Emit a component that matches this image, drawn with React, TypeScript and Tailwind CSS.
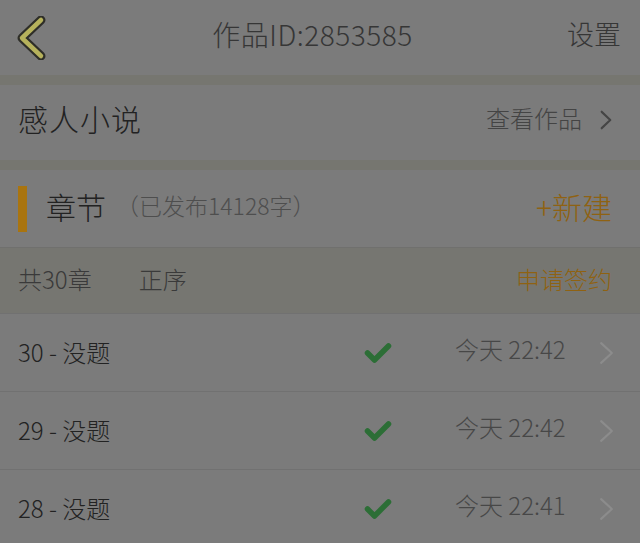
import React from "react";

const font = { fontFamily: '"Noto Sans CJK SC", "Noto Sans", sans-serif' };

function Chevron({ color, w = 14, h = 22, sw = 2.5 }: { color: string; w?: number; h?: number; sw?: number }) {
  return (
    <svg width={w} height={h} viewBox="0 0 14 22" fill="none" preserveAspectRatio="none">
      <path d="M2 2 L12 11 L2 20" stroke={color} strokeWidth={sw} strokeLinecap="round" strokeLinejoin="round" />
    </svg>
  );
}

function Check() {
  return (
    <svg width="28" height="22" viewBox="0 0 28 22" fill="none">
      <path d="M3.5 11 L10.5 18 L24.5 4" stroke="#2c6e36" strokeWidth="5.5" strokeLinecap="round" strokeLinejoin="round" />
    </svg>
  );
}

function Back() {
  return (
    <svg width="30" height="44" viewBox="0 0 30 44" fill="none">
      <path d="M25 4 L6 22 L25 40" stroke="#2e2e28" strokeWidth="9" strokeLinecap="round" strokeLinejoin="round" />
      <path d="M25 4 L6 22 L25 40" stroke="#b6b25c" strokeWidth="4.5" strokeLinecap="round" strokeLinejoin="round" />
    </svg>
  );
}

const chapters = [
  { n: 30, t: "今天 22:42" },
  { n: 29, t: "今天 22:42" },
  { n: 28, t: "今天 22:41" },
];

export default function App() {
  return (
    <div className="w-[640px] h-[543px] overflow-hidden bg-[#7b7b7b] font-light" style={font}>
      {/* header */}
      <div className="h-[75px] flex items-center justify-between pl-[16px] pr-[19px] bg-[#7b7b7b]">
        <div className="w-[42px] flex items-center">
          <Back />
        </div>
        <div className="pb-[8px] text-[28px] text-[#363636] leading-none tracking-[0.5px]">作品ID:2853585</div>
        <div className="pb-[8px] text-[27px] text-[#363636] leading-none">设置</div>
      </div>
      <div className="h-[10px] bg-[#767670]" />
      {/* book row */}
      <div className="h-[75px] flex items-center justify-between pl-[18px] pr-[28px] bg-[#7b7b7b]">
        <div className="pb-[10px] text-[30px] text-[#222] leading-none tracking-[1px]">感人小说</div>
        <div className="pb-[6px] flex items-center gap-[18px]">
          <span className="text-[24px] text-[#444] leading-none pb-[4px]">查看作品</span>
          <Chevron color="#454545" w={12} h={20} />
        </div>
      </div>
      <div className="h-[10px] bg-[#767670]" />
      {/* chapter header */}
      <div className="h-[78px] flex items-center justify-between pl-[18px] pr-[28px] bg-[#7b7b7b] border-b border-[#70706e]">
        <div className="flex items-center">
          <div className="w-[9px] h-[46px] bg-[#a9740f]" />
          <span className="ml-[19px] pb-[6px] text-[30px] text-[#222] leading-none">章节</span>
          <span className="ml-[10px] pb-[6px] text-[23px] text-[#4e4e4e] leading-none">（已发布14128字）</span>
        </div>
        <div className="pb-[6px] text-[30px] text-[#8f6212] leading-none">+新建</div>
      </div>
      {/* sort row */}
      <div className="h-[65px] flex items-center justify-between pl-[18px] pr-[28px] bg-[#767671]">
        <div className="pb-[4px] flex items-center gap-[47px] text-[24px] text-[#3a3a3a] leading-none">
          <span>共30章</span>
          <span>正序</span>
        </div>
        <div className="pb-[4px] text-[24px] text-[#8f6212] leading-none">申请签约</div>
      </div>
      {/* chapters */}
      {chapters.map((c) => (
        <div key={c.n} className="h-[78px] flex items-center pl-[18px] pr-[26px] border-t border-[#717171] bg-[#7b7b7b]">
          <div className="w-[346px] pb-[2px] text-[24px] text-[#222] leading-none">{c.n} - 没题</div>
          <div className="w-[91px] flex items-center">
            <Check />
          </div>
          <div className="flex-1 pb-[8px] text-[24px] text-[#474747] leading-none">{c.t}</div>
          <Chevron color="#8c8c8c" w={15} h={24} sw={2} />
        </div>
      ))}
    </div>
  );
}
